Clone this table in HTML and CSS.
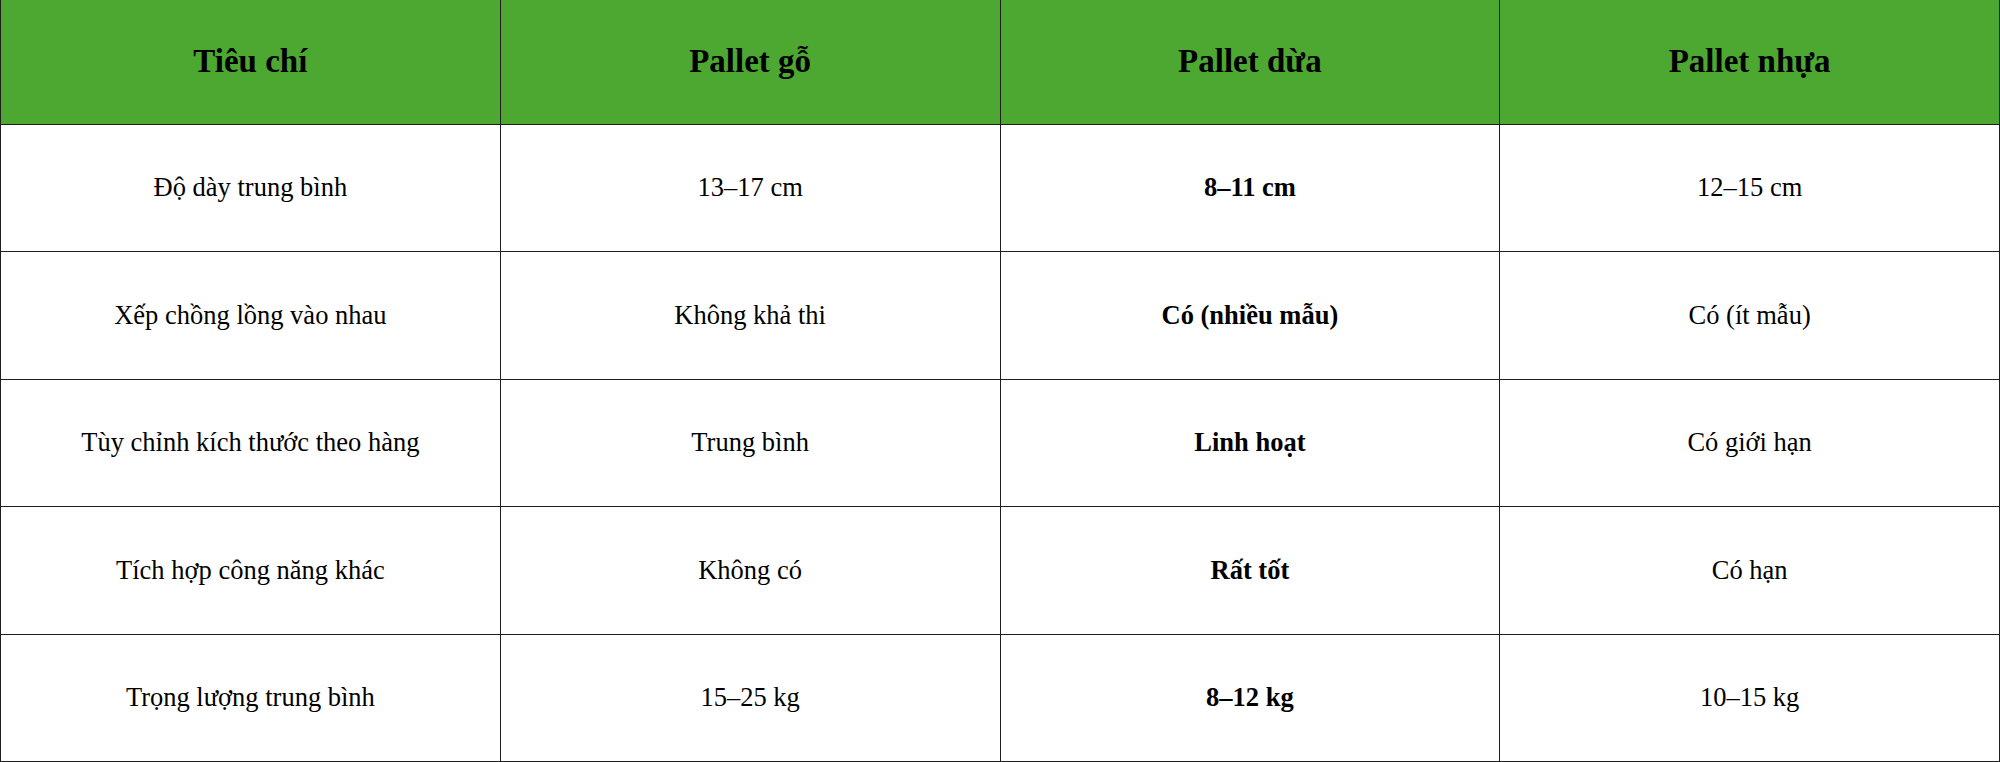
FILE: index.html
```html
<!DOCTYPE html>
<html lang="vi">
<head>
<meta charset="utf-8">
<title>So sánh pallet</title>
<link rel="stylesheet" href="styles.css">
</head>
<body>
<table class="compare">
  <thead>
    <tr class="head-row">
      <th>Tiêu chí</th>
      <th>Pallet gỗ</th>
      <th>Pallet dừa</th>
      <th>Pallet nhựa</th>
    </tr>
  </thead>
  <tbody>
    <tr>
      <td>Độ dày trung bình</td>
      <td>13–17 cm</td>
      <td class="hl">8–11 cm</td>
      <td>12–15 cm</td>
    </tr>
    <tr>
      <td>Xếp chồng lồng vào nhau</td>
      <td>Không khả thi</td>
      <td class="hl">Có (nhiều mẫu)</td>
      <td>Có (ít mẫu)</td>
    </tr>
    <tr>
      <td>Tùy chỉnh kích thước theo hàng</td>
      <td>Trung bình</td>
      <td class="hl">Linh hoạt</td>
      <td>Có giới hạn</td>
    </tr>
    <tr>
      <td>Tích hợp công năng khác</td>
      <td>Không có</td>
      <td class="hl">Rất tốt</td>
      <td>Có hạn</td>
    </tr>
    <tr>
      <td>Trọng lượng trung bình</td>
      <td>15–25 kg</td>
      <td class="hl">8–12 kg</td>
      <td>10–15 kg</td>
    </tr>
  </tbody>
</table>
</body>
</html>
```

FILE: styles.css
```css
html, body {
  margin: 0;
  padding: 0;
  background: #ffffff;
}

body {
  font-family: "Liberation Serif", "Times New Roman", serif;
  color: #000000;
  overflow: hidden;
}

.compare {
  width: 2000px;
  border-collapse: collapse;
  table-layout: fixed;
}

.compare th,
.compare td {
  width: 25%;
  border: 1px solid #1e1e1e;
  text-align: center;
  vertical-align: middle;
  padding: 0;
}

.compare th {
  background: #4ca830;
  font-size: 33px;
  font-weight: bold;
  border-top: none;
  border-color: #1f3a14 #1e1e1e #14240e #1e1e1e;
}

.head-row {
  height: 124px;
}

.compare tbody tr {
  height: 127.5px;
}

.compare td {
  font-size: 26.5px;
}

.compare td.hl {
  font-weight: bold;
}
```
